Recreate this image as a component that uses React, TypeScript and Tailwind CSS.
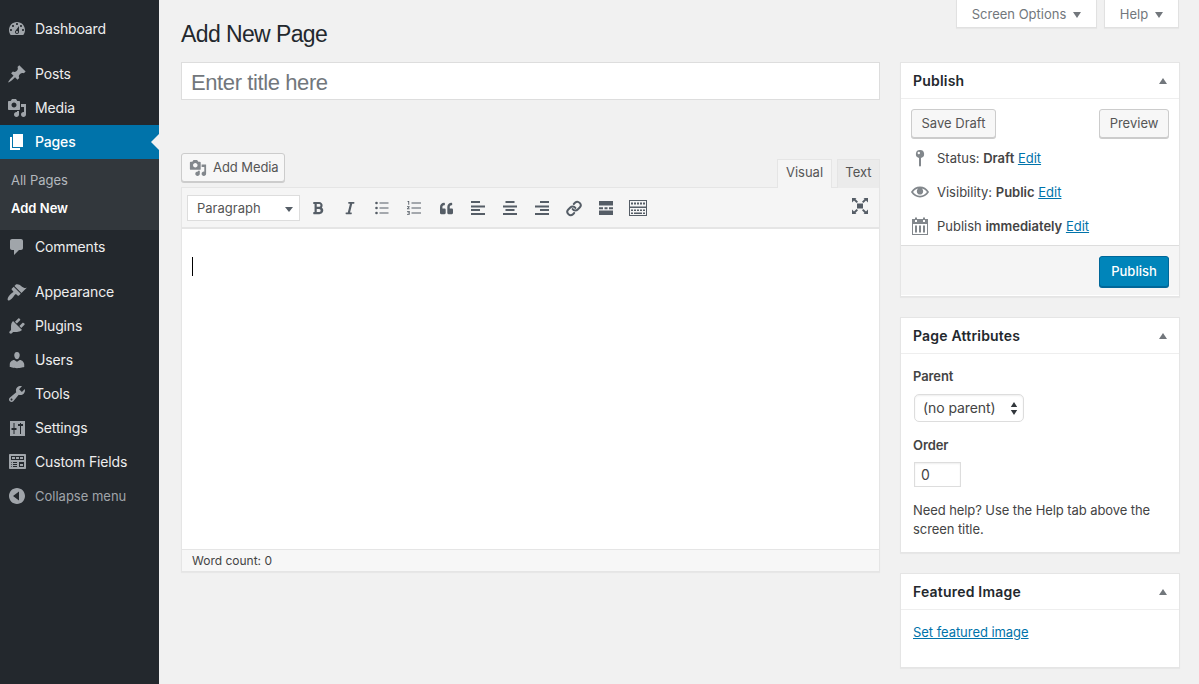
import type { ReactNode } from "react";
import { FaBold, FaItalic, FaQuoteLeft } from "react-icons/fa";

const font = "font-['Inter','Noto_Sans',sans-serif]";
const displayFont = "font-['Liberation_Sans',Arial,sans-serif]";

// dashicons, drawn on a 20x20 box
const icons: Record<string, string> = {
  dashboard:
    "M3.76 16h12.48c1.1-1.37 1.76-3.11 1.76-5 0-4.42-3.58-8-8-8s-8 3.58-8 8c0 1.89.66 3.63 1.76 5zM10 4c.55 0 1 .45 1 1s-.45 1-1 1-1-.45-1-1 .45-1 1-1zM6 6c.55 0 1 .45 1 1s-.45 1-1 1-1-.45-1-1 .45-1 1-1zm8 0c.55 0 1 .45 1 1s-.45 1-1 1-1-.45-1-1 .45-1 1-1zm-5.37 5.55L12 7v6c0 1.1-.9 2-2 2s-2-.9-2-2c0-.57.24-1.08.63-1.45zM4 10c.55 0 1 .45 1 1s-.45 1-1 1-1-.45-1-1 .45-1 1-1zm12 0c.55 0 1 .45 1 1s-.45 1-1 1-1-.45-1-1 .45-1 1-1zm-5 3c0-.55-.45-1-1-1s-1 .45-1 1 .45 1 1 1 1-.45 1-1z",
  post: "M10.44 3.02l1.82-1.82 6.36 6.35-1.83 1.82c-1.05-.68-2.48-.57-3.41.36l-.75.75c-.92.93-1.04 2.35-.35 3.41l-1.83 1.82-2.41-2.41-2.8 2.79c-.42.42-3.38 2.71-3.8 2.29s1.86-3.39 2.28-3.81l2.79-2.79L4.1 9.36l1.83-1.82c1.05.69 2.48.57 3.4-.36l.75-.75c.93-.92 1.05-2.35.36-3.41z",
  media:
    "M13 11V4c0-.55-.45-1-1-1h-1.67L9 1H5L3.67 3H2c-.55 0-1 .45-1 1v7c0 .55.45 1 1 1h10c.55 0 1-.45 1-1zM7 4.5c1.38 0 2.5 1.12 2.5 2.5S8.38 9.5 7 9.5 4.5 8.38 4.5 7 5.62 4.5 7 4.5zM14 6h5v10.5c0 1.38-1.12 2.5-2.5 2.5S14 17.88 14 16.5s1.12-2.5 2.5-2.5c.17 0 .34.02.5.05V9h-3V6zm-4 8.05V13h2v3.5c0 1.38-1.12 2.5-2.5 2.5S7 17.88 7 16.5 8.12 14 9.5 14c.17 0 .34.02.5.05z",
  page: "M6 15V2h10v13H6zm-1 1h8v2H3V5h2v11z",
  comments:
    "M5 2h9c1.1 0 2 .9 2 2v7c0 1.1-.9 2-2 2h-2l-5 5v-5H5c-1.1 0-2-.9-2-2V4c0-1.1.9-2 2-2z",
  appearance:
    "M14.48 11.06L7.41 3.99l1.5-1.5c.5-.56 2.3-.47 3.51.32 1.21.8 1.43 1.28 2.91 2.1 1.18.64 2.45 1.26 4.45.85zm-.71.71L6.7 4.7 4.93 6.47c-.39.39-.39 1.02 0 1.41l1.06 1.06c.39.39.39 1.03 0 1.42-.6.6-1.43 1.11-2.21 1.69-.35.26-.7.53-1.01.84C1.4 14.26-.16 17.09 1.03 18.28 2.22 19.47 4.21 17.07 5.58 15.7c.31-.31.58-.66.84-1.01.58-.78 1.09-1.61 1.69-2.21.39-.39 1.03-.39 1.42 0l1.06 1.06c.39.39 1.02.39 1.41 0z",
  plugins:
    "M13.11 4.36L9.87 7.6 8 5.73l3.24-3.24c.35-.34 1.05-.2 1.56.32.52.51.66 1.21.31 1.55zm-8 1.77l.91-1.12 9.01 9.01-1.19.84c-.71.71-2.63 1.16-3.82 1.16H6.14L4.9 17.26c-.59.59-1.54.59-2.12 0-.59-.58-.59-1.53 0-2.12l1.24-1.24v-3.88c0-1.13.4-3.19 1.09-3.89zm7.26 3.97l3.24-3.24c.34-.35 1.04-.21 1.55.31.52.51.66 1.21.31 1.55l-3.24 3.25z",
  users:
    "M10 9.25c-2.27 0-2.73-3.44-2.73-3.44C7 4.02 7.82 2 9.97 2c2.16 0 2.98 2.02 2.71 3.81 0 0-.41 3.44-2.68 3.44zm0 2.57L12.72 10c2.39 0 4.52 2.33 4.52 4.53v2.49s-3.65 1.13-7.24 1.13c-3.65 0-7.24-1.13-7.24-1.13v-2.49c0-2.25 1.94-4.48 4.47-4.48z",
  tools:
    "M16.68 9.77c-1.34 1.34-3.3 1.67-4.95.99l-5.41 6.52c-.99.99-2.59.99-3.58 0s-.99-2.59 0-3.57l6.52-5.42c-.68-1.65-.35-3.61.99-4.95 1.28-1.28 3.12-1.62 4.72-1.06l-2.89 2.89 2.82 2.82 2.86-2.87c.53 1.58.18 3.39-1.08 4.65zM3.81 16.21c.4.39 1.04.39 1.43 0 .4-.4.4-1.04 0-1.43-.39-.4-1.03-.4-1.43 0-.39.39-.39 1.03 0 1.43z",
  settings:
    "M3 3h15v15H3zM6.5 5h1v5h2v2h-2v4h-1v-4h-2v-2h2zM13 5h1v1h2v2h-2v8h-1V8h-2V6h2z",
  fields:
    "M19 16V3c0-.55-.45-1-1-1H3c-.55 0-1 .45-1 1v13c0 .55.45 1 1 1h15c.55 0 1-.45 1-1zM4 4h13v4H4V4zm1 1v2h3V5H5zm4 0v2h3V5H9zm4 0v2h3V5h-3zm-8.5 5c.28 0 .5.22.5.5s-.22.5-.5.5-.5-.22-.5-.5.22-.5.5-.5zM6 10h4v1H6v-1zm6 0h5v5h-5v-5zm-7.5 2c.28 0 .5.22.5.5s-.22.5-.5.5-.5-.22-.5-.5.22-.5.5-.5zM6 12h4v1H6v-1zm7 0v2h3v-2h-3zm-8.5 2c.28 0 .5.22.5.5s-.22.5-.5.5-.5-.22-.5-.5.22-.5.5-.5zM6 14h4v1H6v-1z",
  collapse:
    "M10 18c-4.42 0-8-3.58-8-8s3.58-8 8-8 8 3.58 8 8-3.58 8-8 8zm2-12.5L6 10l6 4.5z",
  eye: "M19.7 9.4C17.7 6 14 3.9 10 3.9S2.3 6 .3 9.4L0 10l.3.6c2 3.4 5.7 5.5 9.7 5.5s7.7-2.1 9.7-5.5l.3-.6-.3-.6zM10 14.1c-3.1 0-6-1.6-7.7-4.1C3.6 8 5.7 6.6 8 6.1c-.9.7-1.5 1.9-1.5 3.3 0 1.9 1.6 3.5 3.5 3.5s3.5-1.6 3.5-3.5c0-1.4-.6-2.6-1.5-3.3 2.3.5 4.4 1.9 5.7 3.9-1.7 2.5-4.6 4.1-7.7 4.1z",
  pin: "M10 2a4 4 0 0 0-1 7.9V17.500a1 1 0 0 0 2 0V9.900A4 4 0 0 0 10 2zM8.800 3.800a1.200 1.200 0 1 1 0 2.400 1.200 1.200 0 0 1 0-2.400z",
  calendar:
    "M15 3h3v16H2V3h3V1.500h2V3h6V1.500h2V3zM5 4v2h2V4H5zm8 0v2h2V4h-2zm4 4H3v10h14V8zM5 9.500h2v7H5v-7zm4 0h2v7H9v-7zm4 0h2v7h-2v-7z",
};

function Dash({ name, className }: { name: string; className: string }) {
  return (
    <svg viewBox="0 0 20 20" className={className} fill="currentColor">
      <path d={icons[name]} fillRule="evenodd" />
    </svg>
  );
}

function MenuItem({ icon, label, dim }: { icon: string; label: string; dim?: boolean }) {
  return (
    <div className="flex h-[34px] items-center">
      <Dash name={icon} className="ml-[7px] h-5 w-5 text-[#a0a5aa]" />
      <span className={`ml-2 ${dim ? "pt-[2px] text-[13px] text-[#a0a5aa]" : "pb-[2px] text-[14px] tracking-[-0.15px] text-[#eeeeee]"}`}>
        {label}
      </span>
    </div>
  );
}

function Sidebar() {
  return (
    <aside className="w-[159px] shrink-0 bg-[#23282d] pt-3">
      <MenuItem icon="dashboard" label="Dashboard" />
      <div className="h-[11px]" />
      <MenuItem icon="post" label="Posts" />
      <MenuItem icon="media" label="Media" />
      <div className="relative flex h-[34px] items-center bg-[#0073aa] text-white">
        <Dash name="page" className="ml-[7px] h-5 w-5" />
        <span className="ml-2 pb-[2px] text-[14px] font-medium tracking-[-0.15px]">Pages</span>
        <div className="absolute right-0 top-[9px] h-0 w-0 border-y-[8px] border-r-[8px] border-y-transparent border-r-[#f1f1f1]" />
      </div>
      <div className="flex h-[71px] flex-col bg-[#32373c] pt-[8px] text-[13px]">
        <div className="flex h-7 items-center pl-[11px] text-[#b4b9be]">All Pages</div>
        <div className="flex h-7 items-center pl-[11px] font-semibold text-white">Add New</div>
      </div>
      <MenuItem icon="comments" label="Comments" />
      <div className="h-[11px]" />
      <MenuItem icon="appearance" label="Appearance" />
      <MenuItem icon="plugins" label="Plugins" />
      <MenuItem icon="users" label="Users" />
      <MenuItem icon="tools" label="Tools" />
      <MenuItem icon="settings" label="Settings" />
      <MenuItem icon="fields" label="Custom Fields" />
      <MenuItem icon="collapse" label="Collapse menu" dim />
    </aside>
  );
}

function Caret() {
  return <span className="ml-[7px] h-0 w-0 border-x-[4.5px] border-t-[6px] border-x-transparent border-t-[#72777c]" />;
}

function ScreenTab({ label, className }: { label: string; className: string }) {
  return (
    <div className={`flex h-[28px] items-center justify-center border-x border-b border-[#e1e1e1] bg-white pt-[3px] text-[13px] text-[#72777c] shadow-[0_1px_1px_rgba(0,0,0,0.04)] ${className}`}>
      {label}
      <Caret />
    </div>
  );
}

function Button({ children, className }: { children: ReactNode; className: string }) {
  return (
    <div className={`flex items-center rounded-[3px] border border-[#cccccc] bg-[#f7f7f7] text-[13px] text-[#555555] shadow-[0_1px_0_#cccccc] ${className}`}>
      {children}
    </div>
  );
}

function ToolLines({ kind }: { kind: "left" | "center" | "right" }) {
  const d = {
    left: "M0 0h9v2H0zM0 4.500h14v2H0zM0 8h9v2H0zM0 12h14v2H0z",
    center: "M2.500 0h9v2h-9zM0 4.500h14v2H0zM2.500 8h9v2h-9zM0 12h14v2H0z",
    right: "M5 0h9v2H5zM0 4.500h14v2H0zM5 8h9v2H5zM0 12h14v2H0z",
  }[kind];
  return (
    <svg viewBox="0 0 14 14" className="h-[14px] w-[14px]" fill="#555d66">
      <path d={d} />
    </svg>
  );
}

function Toolbar() {
  return (
    <div className="flex h-[41px] items-center border-b-2 border-[#e5e5e5] bg-[#f5f5f5] pl-[5px] pr-[11px] pt-px text-[#555d66]">
      <div className="flex h-[26px] w-[113px] items-center justify-between border border-[#dddddd] bg-white pl-[9px] pr-[6px] pt-[2px] text-[13px] text-[#555555]">
        Paragraph
        <span className="h-0 w-0 border-x-[4px] border-t-[5px] border-x-transparent border-t-[#555d66]" />
      </div>
      <div className="ml-[10px] flex w-[16px] justify-center"><FaBold className="h-[14px] w-[14px]" /></div>
      <div className="ml-[16px] flex w-[16px] justify-center"><FaItalic className="h-[14px] w-[14px]" /></div>
      <div className="ml-[16px] flex w-[16px] justify-center">
        <svg viewBox="0 0 14 14" className="h-[14px] w-[14px]" fill="#555d66">
          <circle cx="1.500" cy="2" r="1.300" /><circle cx="1.500" cy="7" r="1.300" /><circle cx="1.500" cy="12" r="1.300" />
          <path d="M4.500 1.500h9v1h-9zM4.500 6.500h9v1h-9zM4.500 11.500h9v1h-9z" />
        </svg>
      </div>
      <div className="ml-[16px] flex w-[16px] justify-center">
        <svg viewBox="0 0 14 14" className="h-[14px] w-[14px]" fill="#555d66">
          <path d="M.6 0h1.600v3.800H1.300V1H.6zM0 5.300h2.600v.8L1.300 7.500h1.400v.7H0v-.7l1.500-1.500H0zM0 10h2.700v3.800H0V13h1.800v-.7H.6v-.7h1.200v-.8H0z" />
          <path d="M4.500 1.500h9.500v1H4.500zM4.500 6.500h9.500v1H4.500zM4.500 11.500h9.500v1H4.500z" />
        </svg>
      </div>
      <div className="ml-[16px] flex w-[16px] justify-center"><FaQuoteLeft className="h-[13px] w-[15px]" /></div>
      <div className="ml-[16px] flex w-[16px] justify-center"><ToolLines kind="left" /></div>
      <div className="ml-[16px] flex w-[16px] justify-center"><ToolLines kind="center" /></div>
      <div className="ml-[16px] flex w-[16px] justify-center"><ToolLines kind="right" /></div>
      <div className="ml-[16px] flex w-[16px] justify-center">
        <svg viewBox="0 0 24 24" className="h-[19px] w-[19px]" fill="none" stroke="#555d66" strokeWidth="3" strokeLinecap="round" strokeLinejoin="round">
          <path d="M10 13a5 5 0 0 0 7.54.54l3-3a5 5 0 0 0-7.07-7.07l-1.72 1.71" />
          <path d="M14 11a5 5 0 0 0-7.54-.54l-3 3a5 5 0 0 0 7.07 7.07l1.71-1.71" />
        </svg>
      </div>
      <div className="ml-[16px] flex w-[16px] justify-center">
        <svg viewBox="0 0 14 14" className="h-[14px] w-[14px]" fill="#555d66">
          <path d="M0 0h14v4.500H0zM0 9.500h14V14H0zM0 6.300h4v2H0zM5.500 6.300h3v2h-3zM10 6.300h4v2h-4z" />
        </svg>
      </div>
      <div className="ml-[15px] flex w-[18px] justify-center">
        <svg viewBox="0 0 18 16" className="h-4 w-[18px]" fill="#555d66">
          <path fillRule="evenodd" d="M0 0h18v16H0zM1 1v5.500h16V1zM1 8v7h16V8z" />
          <path d="M2 2.500h2v2H2zM5 2.500h2v2H5zM8 2.500h2v2H8zM11 2.500h2v2h-2zM14 2.500h2v2h-2zM2 9.500h2v1.600H2zM5 9.500h2v1.600H5zM8 9.500h2v1.600H8zM11 9.500h2v1.600h-2zM14 9.500h2v1.600h-2zM2 12.400h2V14H2zM5 12.400h8V14H5zM14 12.400h2V14h-2z" />
        </svg>
      </div>
      <div className="mb-[5px] ml-auto flex">
        <svg viewBox="0 0 16 16" className="h-4 w-4" fill="#555d66">
          <path d="M0 0h4.500L3.400 1.100 6 3.700 4.600 5 2 2.500 0 4.500zM16 0v4.500l-2-2-2.600 2.500L10 3.700l2.600-2.600L11.500 0zM0 16v-4.500l2 2L4.600 11 6 12.300l-2.600 2.600L4.500 16zM16 16h-4.500l1.100-1.100L10 12.300l1.400-1.300 2.600 2.500 2-2z" />
          <path d="M5 5.500h6v5H5z" />
        </svg>
      </div>
    </div>
  );
}

function Editor() {
  return (
    <div className="w-[699px]">
      <div className={`flex h-[38px] items-center border border-[#dddddd] bg-white pl-[9px] pt-[2px] text-[22px] tracking-[-0.4px] text-[#72777c] ${displayFont}`}>
        Enter title here
      </div>
      <div className="mt-[53px] flex h-[34px] items-start justify-between">
        <Button className="h-[29px] w-[104px] pl-[7px] tracking-[-0.08px]">
          <Dash name="media" className="mr-[6px] h-[18px] w-[18px] text-[#82878c]" />
          Add Media
        </Button>
        <div className="mt-[6px] flex text-[13px]">
          <div className="relative z-10 flex h-[29px] w-[55px] items-center justify-center border border-b-0 border-[#e5e5e5] bg-[#f5f5f5] pb-[3px] text-[#555555]">Visual</div>
          <div className="relative z-10 ml-[5px] flex h-[29px] w-[43px] items-center justify-center border border-b-0 border-[#e5e5e5] bg-[#ebebeb] pb-[3px] text-[#555555]">Text</div>
        </div>
      </div>
      <div className="border border-[#e5e5e5] bg-white shadow-[0_1px_1px_rgba(0,0,0,0.04)]">
        <Toolbar />
        <div className="h-[320px] px-[10px] pt-[28px]">
          <div className="h-[19px] w-px bg-black" />
        </div>
        <div className="flex h-[22px] items-center border-t border-[#e5e5e5] bg-[#f7f7f7] pl-[10px] text-[12px] text-[#444444]">
          Word count: 0
        </div>
      </div>
    </div>
  );
}

function Box({ title, children, className }: { title: string; children: ReactNode; className?: string }) {
  return (
    <div className={`border border-[#e5e5e5] bg-white shadow-[0_1px_1px_rgba(0,0,0,0.04)] ${className ?? ""}`}>
      <div className="flex h-[36px] items-center justify-between border-b border-[#eeeeee] pl-3 pr-[12px] text-[14px] font-semibold tracking-[0.2px] text-[#23282d]">
        {title}
        <span className="h-0 w-0 border-x-[4.5px] border-b-[6px] border-x-transparent border-b-[#72777c]" />
      </div>
      {children}
    </div>
  );
}

function MiscRow({ icon, children }: { icon: ReactNode; children: ReactNode }) {
  return (
    <div className="flex h-[34px] items-center pl-[10px] text-[13px] text-[#444444]">
      <div className="flex w-[26px] shrink-0">{icon}</div>
      <div className="pt-[2px]">{children}</div>
    </div>
  );
}

function EditLink() {
  return <span className="text-[#0073aa] underline">Edit</span>;
}

function SidePanels() {
  return (
    <div className="flex w-[280px] flex-col gap-[20px]">
      <Box title="Publish" className="h-[235px]">
        <div className="flex justify-between px-[10px] pt-[10px]">
          <Button className="h-[29px] w-[85px] justify-center">Save Draft</Button>
          <Button className="h-[29px] w-[70px] justify-center">Preview</Button>
        </div>
        <div className="mt-[3px]">
          <MiscRow icon={<Dash name="pin" className="h-5 w-5 text-[#82878c] -ml-[1px]" />}>
            Status: <b className="font-semibold">Draft</b> <EditLink />
          </MiscRow>
          <MiscRow icon={<Dash name="eye" className="h-[18px] w-[18px] text-[#82878c]" />}>
            Visibility: <b className="font-semibold">Public</b> <EditLink />
          </MiscRow>
          <MiscRow icon={<Dash name="calendar" className="h-5 w-5 -ml-px text-[#82878c]" />}>
            Publish <b className="font-semibold">immediately</b> <EditLink />
          </MiscRow>
        </div>
        <div className="mt-[2px] flex h-[50px] items-start justify-end border-t border-[#dddddd] bg-[#f5f5f5] pr-[10px] pt-[10px]">
          <div className="flex h-[31px] w-[70px] items-center justify-center rounded-[3px] border border-[#006799] bg-[#0085ba] text-[13px] font-medium text-white shadow-[0_1px_0_#006799]">
            Publish
          </div>
        </div>
      </Box>
      <Box title="Page Attributes" className="h-[236px]">
        <div className="px-3 text-[13px] tracking-[-0.08px] text-[#444444]">
          <div className="mt-[12px] font-semibold leading-[20px]">Parent</div>
          <div className="ml-px mt-[8px] flex h-[28px] w-[110px] items-center justify-between rounded-[5px] border border-[#dddddd] bg-white pb-[2px] pl-[8px] pr-[5px] text-[14px] shadow-[inset_0_1px_2px_rgba(0,0,0,0.07)]">
            (no parent)
            <svg viewBox="0 0 8 13" className="mt-[2px] h-[13px] w-2" fill="#32373c">
              <path d="M4 0l3.200 5H.8zM4 13L.8 8h6.400z" />
            </svg>
          </div>
          <div className="mt-[13px] font-semibold leading-[20px]">Order</div>
          <div className="ml-px mt-[7px] flex h-[25px] w-[47px] items-center border border-[#dddddd] bg-white pl-[6px] text-[14px] shadow-[inset_0_1px_2px_rgba(0,0,0,0.07)]">0</div>
          <p className="mt-[14px] leading-[19px]">Need help? Use the Help tab above the screen title.</p>
        </div>
      </Box>
      <Box title="Featured Image" className="h-[95px]">
        <div className="mt-[12px] px-3 text-[13px] leading-[20px] tracking-[-0.05px] text-[#0073aa] underline">Set featured image</div>
      </Box>
    </div>
  );
}

export default function App() {
  return (
    <div className={`flex h-[684px] w-[1199px] overflow-hidden bg-[#f1f1f1] ${font}`}>
      <Sidebar />
      <main className="flex-1 pl-[22px] pr-[19px]">
        <div className="flex h-[20px] justify-end gap-[7px] pr-px">
          <ScreenTab label="Screen Options" className="w-[141px]" />
          <ScreenTab label="Help" className="w-[75px]" />
        </div>
        <h1 className={`h-[42px] text-[23px] leading-[28px] tracking-[-0.6px] text-[#23282d] ${displayFont}`}>Add New Page</h1>
        <div className="flex justify-between">
          <Editor />
          <SidePanels />
        </div>
      </main>
    </div>
  );
}
